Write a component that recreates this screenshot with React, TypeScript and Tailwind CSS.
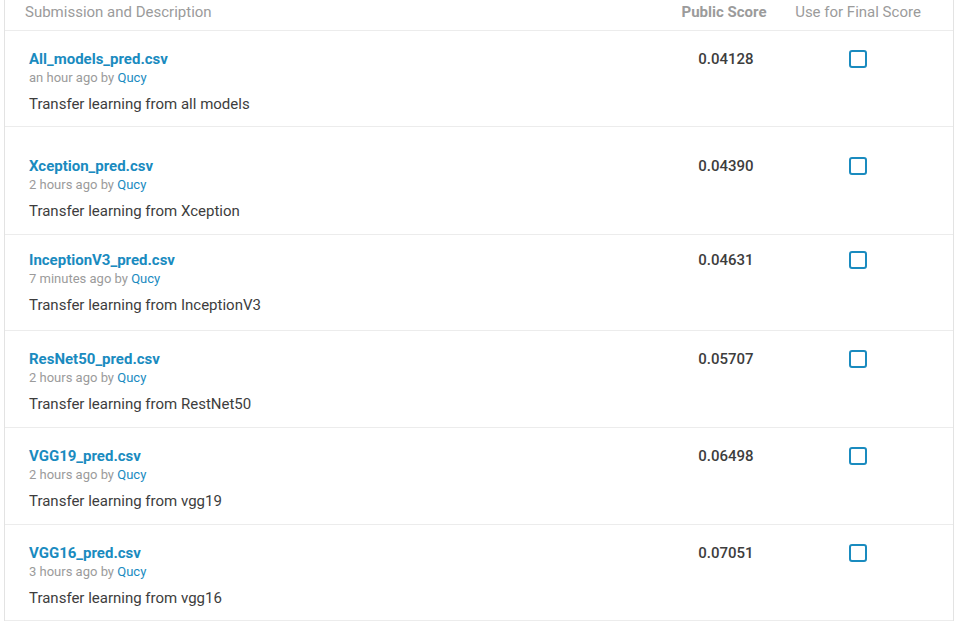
const rows = [
  { name: "All_models_pred.csv", time: "an hour ago", desc: "Transfer learning from all models", score: "0.04128", h: "h-[96px]", pt: "pt-[19px]" },
  { name: "Xception_pred.csv", time: "2 hours ago", desc: "Transfer learning from Xception", score: "0.04390", h: "h-[108px]", pt: "pt-[30px]" },
  { name: "InceptionV3_pred.csv", time: "7 minutes ago", desc: "Transfer learning from InceptionV3", score: "0.04631", h: "h-[96px]", pt: "pt-[16px]" },
  { name: "ResNet50_pred.csv", time: "2 hours ago", desc: "Transfer learning from RestNet50", score: "0.05707", h: "h-[97px]", pt: "pt-[19px]" },
  { name: "VGG19_pred.csv", time: "2 hours ago", desc: "Transfer learning from vgg19", score: "0.06498", h: "h-[97px]", pt: "pt-[19px]" },
  { name: "VGG16_pred.csv", time: "3 hours ago", desc: "Transfer learning from vgg16", score: "0.07051", h: "h-[96px]", pt: "pt-[19px]" },
];

export default function App() {
  return (
    <div className="w-[962px] h-[628px] bg-white overflow-hidden font-['Roboto',_'Liberation_Sans',_sans-serif]">
      <div className="ml-1 w-[950px] border-x border-[#e3e3e3]">
        {/* header */}
        <div className="flex h-[31px] border-b border-[#ececec] text-[15px] leading-[20px] text-[#9b9b9b]">
          <div className="flex-1 pl-5 pt-[2px]">Submission and Description</div>
          <div className="w-[120px] text-center pt-[2px] font-bold">Public Score</div>
          <div className="w-[148px] text-center pt-[2px]">Use for Final Score</div>
          <div className="w-[21px]" />
        </div>

        {rows.map((r) => (
          <div key={r.name} className={`flex border-b border-[#ececec] ${r.h} ${r.pt}`}>
            <div className="flex-1 pl-6">
              <div className="text-[15px] leading-[18px] font-bold text-[#1a8bbf]">{r.name}</div>
              <div className="mt-[2px] text-[13px] leading-[16px] text-[#9b9b9b]">
                {r.time} by <span className="text-[#1a8bbf]">Qucy</span>
              </div>
              <div className="mt-[8px] text-[15px] leading-[20px] text-[#3d3d3d]">{r.desc}</div>
            </div>
            <div className="w-[120px] pl-[4px] text-center text-[15px] leading-[18px] font-medium text-[#3d3d3d]">
              {r.score}
            </div>
            <div className="w-[148px] flex justify-center">
              <div className="w-[18px] h-[18px] border-2 border-[#1a8bbf] rounded-[3px]" />
            </div>
            <div className="w-[21px]" />
          </div>
        ))}
      </div>
    </div>
  );
}
